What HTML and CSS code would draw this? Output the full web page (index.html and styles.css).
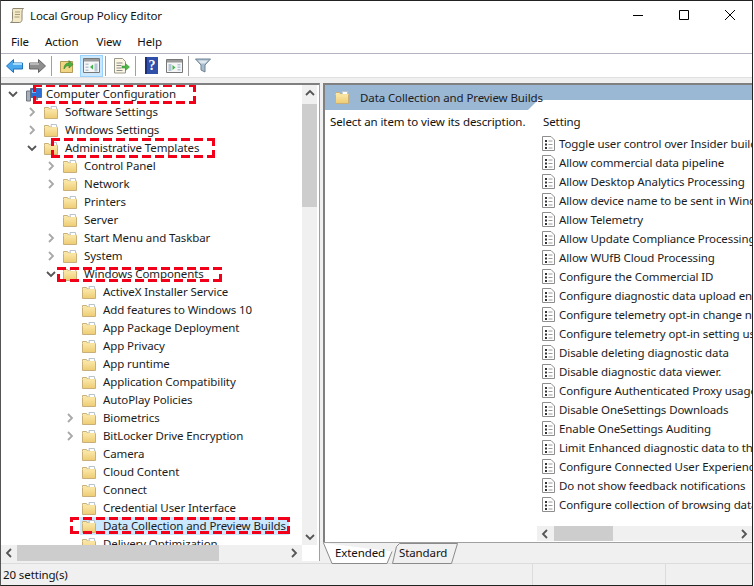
FILE: index.html
```html
<!DOCTYPE html>
<html lang="en">
<head>
<meta charset="utf-8">
<title>Local Group Policy Editor</title>
<link rel="stylesheet" href="styles.css">
</head>
<body>
<svg class="defs" width="0" height="0" aria-hidden="true">
  <defs>
    <linearGradient id="fg" x1="0" y1="0" x2="0" y2="1"><stop offset="0" stop-color="#fdeeb4"/><stop offset="1" stop-color="#eecb72"/></linearGradient>
    <symbol id="folder" viewBox="0 0 16 15">
      <path d="M1.500 2.500h4l1 1.500h8v9.500h-13z" fill="url(#fg)" stroke="#c9b07a"/>
      <path d="M8 1.500h5.500v3h-5z" fill="#fff" stroke="#b9c4cc"/>
      <path d="M1.500 4.500h13" stroke="#f7e3a0"/>
    </symbol>
    <symbol id="doc" viewBox="0 0 13 15">
      <path d="M.5.500h8.500l3.500 3.500v10.500h-12z" fill="#fff" stroke="#8e8e8e"/>
      <path d="M3 4h2v2h-2zM3 7.500h2v2h-2zM3 11h2v2h-2z" fill="#333"/>
      <path d="M6.500 5h4M6.500 8.500h4M6.500 12h4" stroke="#9a9a9a"/>
    </symbol>
    <symbol id="open" viewBox="0 0 12 12"><path d="M2 4l4 4 4-4" fill="none" stroke="#555" stroke-width="1.800"/></symbol>
    <symbol id="closed" viewBox="0 0 12 12"><path d="M4 2l4 4-4 4" fill="none" stroke="#a8a8a8" stroke-width="1.800"/></symbol>
    <symbol id="up" viewBox="0 0 12 12"><path d="M2 8l4-4 4 4" fill="none" stroke="#555" stroke-width="1.800"/></symbol>
    <symbol id="down" viewBox="0 0 12 12"><path d="M2 4l4 4 4-4" fill="none" stroke="#555" stroke-width="1.800"/></symbol>
    <symbol id="left" viewBox="0 0 12 12"><path d="M8 2l-4 4 4 4" fill="none" stroke="#555" stroke-width="1.800"/></symbol>
    <symbol id="right" viewBox="0 0 12 12"><path d="M4 2l4 4-4 4" fill="none" stroke="#555" stroke-width="1.800"/></symbol>
  </defs>
</svg>

<div class="window">
  <header class="titlebar">
    <svg class="app-icon" width="16" height="17" viewBox="0 0 16 17">
      <path d="M4 1.500h10.500c-1.500 1-1.500 3-1.500 5v6c0 1.500-1 3-2.500 3h-9c1.500-.5 2-1.500 2-3v-8c0-1.500 0-3 .5-3z" fill="#f3e9c6" stroke="#8d8672"/>
      <path d="M6 5h5M6 7.500h5M5.500 10h5" stroke="#a89c78"/>
    </svg>
    <span class="title-text">Local Group Policy Editor</span>
    <div class="controls">
      <svg width="46" height="20" viewBox="0 0 46 20"><path d="M18 10.500h10" stroke="#000"/></svg>
      <svg width="46" height="20" viewBox="0 0 46 20"><path d="M18.500 5.500h9v9h-9z" fill="none" stroke="#000"/></svg>
      <svg width="46" height="20" viewBox="0 0 46 20"><path d="M18 5l10 10M28 5l-10 10" stroke="#000" fill="none"/></svg>
    </div>
  </header>

  <nav class="menubar">
    <span class="menu-item">File</span>
    <span class="menu-item">Action</span>
    <span class="menu-item">View</span>
    <span class="menu-item">Help</span>
  </nav>

  <div class="toolbar">
    <span class="tool"><svg width="17" height="14" viewBox="0 0 17 14"><path d="M7.500.500v3.500h9v6h-9v3.500l-7-6.500z" fill="#4aa8ee" stroke="#1e73bb"/><path d="M7 5h9" stroke="#a5d8fb" stroke-width="2"/></svg></span>
    <span class="tool"><svg width="17" height="14" viewBox="0 0 17 14"><path d="M9.500.500v3.500h-9v6h9v3.500l7-6.500z" fill="#8e8e8e" stroke="#666"/><path d="M1 5h9" stroke="#b8b8b8" stroke-width="2"/></svg></span>
    <span class="tool-sep"></span>
    <span class="tool"><svg width="16" height="15" viewBox="0 0 16 15"><path d="M1.500 3.500h12v11h-12z" fill="#f0d582" stroke="#b59a58"/><path d="M5 11c0-4 2-6 5-6V2.500l4 4-4 3.500V7.500C8 7.500 6.500 8.500 5 11z" fill="#4caf3f" stroke="#2d7d2a" stroke-width=".6"/></svg></span>
    <span class="tool tool-on"><svg width="17" height="15" viewBox="0 0 17 15"><path d="M.5.500h16v14h-16z" fill="#f6f6f6" stroke="#777"/><path d="M1 1h15v2.500h-15z" fill="#9a9a9a"/><path d="M2.500 5.500h3v1.500h-3zM2.500 8.500h3v1.500h-3zM2.500 11.500h3v1.500h-3zM11.500 5.500h3v8h-3z" fill="#b6c6d6"/><path d="M10 6.500v5l-3-2.500z" fill="#3fb54a"/></svg></span>
    <span class="tool-sep"></span>
    <span class="tool"><svg width="17" height="16" viewBox="0 0 17 16"><path d="M1.500.500h8l3 3v11.500h-11z" fill="#fbf6e2" stroke="#9a9a8c"/><path d="M3.500 5h6M3.500 7.500h5M3.500 10h5M3.500 12.500h6" stroke="#8c8c8c"/><path d="M9 8h3.500V5.500L16.500 9l-4 3.500V10H9z" fill="#4fb648" stroke="#2f8a30" stroke-width=".5"/></svg></span>
    <span class="tool-sep"></span>
    <span class="tool"><svg class="help" width="13" height="17" viewBox="0 0 13 17"><rect width="13" height="17" fill="#2f4fa8"/><rect x="0" width="2" height="17" fill="#1c2f78"/><text x="3.500" y="13" class="help-q">?</text></svg></span>
    <span class="tool"><svg width="17" height="14" viewBox="0 0 17 14"><path d="M.5.500h16v13h-16z" fill="#f6f6f6" stroke="#777"/><path d="M1 1h15v2.500h-15z" fill="#9a9a9a"/><path d="M11.500 5h3v1.500h-3zM11.500 7.500h3v1.500h-3zM11.500 10h3v1.500h-3zM2.500 5h3v7h-3z" fill="#b6c6d6"/><path d="M6.500 6v5l3-2.500z" fill="#3fb54a"/></svg></span>
    <span class="tool-sep"></span>
    <span class="tool"><svg width="16" height="15" viewBox="0 0 16 15"><path d="M.5 1h15l-5.500 6v7l-4-2v-5z" fill="#a8bccb" stroke="#6d8295"/><path d="M3 2.500h10l-3 3h-4z" fill="#dfe8ef"/></svg></span>
  </div>
  <div class="strip"></div>

  <main class="panes">
    <section class="tree-pane">
      <div class="tree-body">
        <div class="tree">
          <div class="row lv0"><svg class="twist"><use href="#open"/></svg>
            <svg class="computer" width="16" height="15" viewBox="0 0 16 15"><path d="M.5 4h4v10h-4z" fill="#a9afb8" stroke="#6f7680"/><path d="M4.500 1.500h11v9h-11z" fill="#2b6fd4" stroke="#5a6e8a"/><path d="M6 3h4v3h-4z" fill="#74b4f2"/><path d="M8 11h4v2h-4z" fill="#8a93a0"/></svg>
            <span class="label">Computer Configuration</span><i class="mark mark-a"></i></div>
          <div class="row lv1"><svg class="twist"><use href="#closed"/></svg><svg class="fld"><use href="#folder"/></svg><span class="label">Software Settings</span></div>
          <div class="row lv1"><svg class="twist"><use href="#closed"/></svg><svg class="fld"><use href="#folder"/></svg><span class="label">Windows Settings</span></div>
          <div class="row lv1"><svg class="twist"><use href="#open"/></svg><svg class="fld"><use href="#folder"/></svg><span class="label">Administrative Templates</span><i class="mark mark-b"></i></div>
          <div class="row lv2"><svg class="twist"><use href="#closed"/></svg><svg class="fld"><use href="#folder"/></svg><span class="label">Control Panel</span></div>
          <div class="row lv2"><svg class="twist"><use href="#closed"/></svg><svg class="fld"><use href="#folder"/></svg><span class="label">Network</span></div>
          <div class="row lv2"><span class="twist"></span><svg class="fld"><use href="#folder"/></svg><span class="label">Printers</span></div>
          <div class="row lv2"><span class="twist"></span><svg class="fld"><use href="#folder"/></svg><span class="label">Server</span></div>
          <div class="row lv2"><svg class="twist"><use href="#closed"/></svg><svg class="fld"><use href="#folder"/></svg><span class="label">Start Menu and Taskbar</span></div>
          <div class="row lv2"><svg class="twist"><use href="#closed"/></svg><svg class="fld"><use href="#folder"/></svg><span class="label">System</span></div>
          <div class="row lv2"><svg class="twist"><use href="#open"/></svg><svg class="fld"><use href="#folder"/></svg><span class="label">Windows Components</span><i class="mark mark-c"></i></div>
          <div class="row lv3"><span class="twist"></span><svg class="fld"><use href="#folder"/></svg><span class="label">ActiveX Installer Service</span></div>
          <div class="row lv3"><span class="twist"></span><svg class="fld"><use href="#folder"/></svg><span class="label">Add features to Windows 10</span></div>
          <div class="row lv3"><span class="twist"></span><svg class="fld"><use href="#folder"/></svg><span class="label">App Package Deployment</span></div>
          <div class="row lv3"><span class="twist"></span><svg class="fld"><use href="#folder"/></svg><span class="label">App Privacy</span></div>
          <div class="row lv3"><span class="twist"></span><svg class="fld"><use href="#folder"/></svg><span class="label">App runtime</span></div>
          <div class="row lv3"><span class="twist"></span><svg class="fld"><use href="#folder"/></svg><span class="label">Application Compatibility</span></div>
          <div class="row lv3"><span class="twist"></span><svg class="fld"><use href="#folder"/></svg><span class="label">AutoPlay Policies</span></div>
          <div class="row lv3"><svg class="twist"><use href="#closed"/></svg><svg class="fld"><use href="#folder"/></svg><span class="label">Biometrics</span></div>
          <div class="row lv3"><svg class="twist"><use href="#closed"/></svg><svg class="fld"><use href="#folder"/></svg><span class="label">BitLocker Drive Encryption</span></div>
          <div class="row lv3"><span class="twist"></span><svg class="fld"><use href="#folder"/></svg><span class="label">Camera</span></div>
          <div class="row lv3"><span class="twist"></span><svg class="fld"><use href="#folder"/></svg><span class="label">Cloud Content</span></div>
          <div class="row lv3"><span class="twist"></span><svg class="fld"><use href="#folder"/></svg><span class="label">Connect</span></div>
          <div class="row lv3"><span class="twist"></span><svg class="fld"><use href="#folder"/></svg><span class="label">Credential User Interface</span></div>
          <div class="row lv3 selected"><span class="twist"></span><svg class="fld"><use href="#folder"/></svg><span class="label">Data Collection and Preview Builds</span><i class="mark mark-d"></i></div>
          <div class="row lv3"><span class="twist"></span><svg class="fld"><use href="#folder"/></svg><span class="label">Delivery Optimization</span></div>
        </div>
        <div class="vscroll">
          <svg class="sb-arrow"><use href="#up"/></svg>
          <div class="vtrack"><div class="vthumb"></div></div>
          <svg class="sb-arrow"><use href="#down"/></svg>
        </div>
      </div>
      <div class="hscroll hscroll-tree">
        <svg class="sb-arrow"><use href="#left"/></svg>
        <div class="htrack"><div class="hthumb hthumb-tree"></div></div>
        <svg class="sb-arrow"><use href="#right"/></svg>
      </div>
    </section>

    <section class="detail-pane">
      <div class="detail-box">
        <div class="detail-head">
          <svg class="fld"><use href="#folder"/></svg>
          <span class="head-text">Data Collection and Preview Builds</span>
        </div>
        <div class="detail-body">
          <p class="desc">Select an item to view its description.</p>
          <div class="settings">
            <div class="set-title">Setting</div>
            <div class="set-list">
              <div class="set-row"><svg class="doc"><use href="#doc"/></svg><span>Toggle user control over Insider builds</span></div>
              <div class="set-row"><svg class="doc"><use href="#doc"/></svg><span>Allow commercial data pipeline</span></div>
              <div class="set-row"><svg class="doc"><use href="#doc"/></svg><span>Allow Desktop Analytics Processing</span></div>
              <div class="set-row"><svg class="doc"><use href="#doc"/></svg><span>Allow device name to be sent in Windows diagnostic data</span></div>
              <div class="set-row"><svg class="doc"><use href="#doc"/></svg><span>Allow Telemetry</span></div>
              <div class="set-row"><svg class="doc"><use href="#doc"/></svg><span>Allow Update Compliance Processing</span></div>
              <div class="set-row"><svg class="doc"><use href="#doc"/></svg><span>Allow WUfB Cloud Processing</span></div>
              <div class="set-row"><svg class="doc"><use href="#doc"/></svg><span>Configure the Commercial ID</span></div>
              <div class="set-row"><svg class="doc"><use href="#doc"/></svg><span>Configure diagnostic data upload endpoint</span></div>
              <div class="set-row"><svg class="doc"><use href="#doc"/></svg><span>Configure telemetry opt-in change notifications</span></div>
              <div class="set-row"><svg class="doc"><use href="#doc"/></svg><span>Configure telemetry opt-in setting user interface</span></div>
              <div class="set-row"><svg class="doc"><use href="#doc"/></svg><span>Disable deleting diagnostic data</span></div>
              <div class="set-row"><svg class="doc"><use href="#doc"/></svg><span>Disable diagnostic data viewer.</span></div>
              <div class="set-row"><svg class="doc"><use href="#doc"/></svg><span>Configure Authenticated Proxy usage</span></div>
              <div class="set-row"><svg class="doc"><use href="#doc"/></svg><span>Disable OneSettings Downloads</span></div>
              <div class="set-row"><svg class="doc"><use href="#doc"/></svg><span>Enable OneSettings Auditing</span></div>
              <div class="set-row"><svg class="doc"><use href="#doc"/></svg><span>Limit Enhanced diagnostic data to the minimum</span></div>
              <div class="set-row"><svg class="doc"><use href="#doc"/></svg><span>Configure Connected User Experiences</span></div>
              <div class="set-row"><svg class="doc"><use href="#doc"/></svg><span>Do not show feedback notifications</span></div>
              <div class="set-row"><svg class="doc"><use href="#doc"/></svg><span>Configure collection of browsing data</span></div>
            </div>
            <div class="hscroll hscroll-list">
              <svg class="sb-arrow"><use href="#left"/></svg>
              <div class="htrack"><div class="hthumb hthumb-list"></div></div>
              <svg class="sb-arrow"><use href="#right"/></svg>
            </div>
          </div>
        </div>
      </div>
      <div class="tabs">
        <div class="tab tab-ext">
          <svg class="tab-shape" width="70" height="21" viewBox="0 0 70 21"><path d="M.5 0l8.500 20.500h55l5-12" fill="#fff" stroke="#8a8a8a"/></svg>
          <span class="tab-label">Extended</span>
        </div>
        <div class="tab tab-std">
          <svg class="tab-shape" width="66" height="21" viewBox="0 0 66 21"><path d="M.5 20.500l4-17 3-3h58l-6 20z" fill="#f0f0f0" stroke="#8a8a8a"/></svg>
          <span class="tab-label">Standard</span>
        </div>
      </div>
    </section>
  </main>

  <footer class="statusbar">
    <span class="status-a">20 setting(s)</span>
    <span class="status-b"></span>
    <span class="status-c"></span>
  </footer>
</div>
</body>
</html>
```

FILE: styles.css
```css
* { box-sizing: border-box; }
html, body { margin: 0; padding: 0; background: #fff; }
body {
  width: 754px;
  height: 586px;
  overflow: hidden;
  font: 11.5px/16px "Noto Sans", "Open Sans", "Liberation Sans", sans-serif;
  letter-spacing: -0.1px;
  color: #111;
}
.defs { position: absolute; }
.window {
  width: 753px;
  height: 586px;
  display: flex;
  flex-direction: column;
  border: 1px solid #222;
  border-left-color: #555;
  background: #fff;
}
.titlebar {
  height: 29px;
  flex: none;
  display: flex;
  align-items: center;
  padding-left: 8px;
}
.app-icon { margin-right: 5px; }
.title-text { flex: 1; padding-top: 1px; }
.controls { display: flex; margin-right: -1px; margin-top: -1px; }
.menubar {
  height: 23px;
  flex: none;
  display: flex;
  align-items: center;
  padding-left: 10px;
  gap: 16px;
}
.menu-item:nth-child(3) { margin-left: 2px; }
.toolbar {
  height: 24px;
  flex: none;
  display: flex;
  align-items: center;
  padding-left: 2px;
  border-top: 1px solid #b4b4c0;
}
.tool {
  width: 23px;
  height: 22px;
  display: flex;
  align-items: center;
  justify-content: center;
  border: 1px solid transparent;
}
.tool-on { background: #cce8ff; border-color: #99d1ff; }
.tool-sep { width: 1px; height: 20px; background: #a0a0a0; margin: 0 2px; }
.toolbar .tool-sep:nth-child(3) { margin-right: 4px; }
.toolbar .tool-sep:nth-child(6) { margin-right: 4px; }
.toolbar .tool-sep:nth-child(8) { margin-right: 4px; }
.toolbar .tool:nth-child(4) { padding-right: 1px; margin-right: 1px; }
.help-q { font: bold 14px "Liberation Serif", serif; fill: #fff; }
.strip { height: 6px; flex: none; background: #f0f0f0; border-top: 1px solid #e0e0e0; }

.panes { flex: 1; min-height: 0; display: flex; background: #f0f0f0; }

.tree-pane {
  width: 319px;
  flex: none;
  display: flex;
  flex-direction: column;
  margin-bottom: 2px;
  background: #fff;
  border-top: 2px solid #808080;
  border-right: 1px solid #a0a0a0;
}
.tree-body { flex: 1; min-height: 0; display: flex; }
.tree { flex: 1; min-width: 0; overflow: hidden; }
.row {
  height: 18px;
  display: flex;
  align-items: center;
  position: relative;
  white-space: nowrap;
  color: #1c1c1c;
}
.lv0 { padding-left: 6px; }
.lv1 { padding-left: 25px; }
.lv2 { padding-left: 44px; }
.lv3 { padding-left: 63px; }
.twist { width: 12px; height: 12px; flex: none; margin-right: 5px; }
.fld { width: 16px; height: 15px; flex: none; }
.computer { flex: none; margin-left: 2px; margin-right: 4px; }
.row .label { margin-left: 6px; }
.row.lv0 .label { margin-left: 0; }
.selected::before {
  content: "";
  position: absolute;
  left: 79px;
  right: 13px;
  top: 0;
  bottom: 0;
  background: #cce8ff;
}
.selected .fld, .selected .label, .selected .twist { position: relative; }

.mark {
  position: absolute;
  --c: #f2001a;
  background:
    repeating-linear-gradient(90deg, var(--c) 0 9px, transparent 9px 13px) left top / 100% 3px no-repeat,
    repeating-linear-gradient(90deg, var(--c) 0 9px, transparent 9px 13px) left bottom / 100% 3px no-repeat,
    repeating-linear-gradient(0deg, var(--c) 0 8px, transparent 8px 12px) left top / 3px 100% no-repeat,
    repeating-linear-gradient(0deg, var(--c) 0 8px, transparent 8px 12px) right top / 3px 100% no-repeat;
  z-index: 2;
}
.mark-a { left: 32px; width: 163px; top: -1px; height: 20px; }
.mark-b { left: 50px; width: 164px; top: -1px; height: 20px; }
.mark-c { left: 56px; width: 165px; top: 2px; height: 15px; }
.mark-d { left: 69px; width: 220px; top: 0; height: 17px; }

.vscroll { width: 15px; flex: none; margin-right: 2px; display: flex; flex-direction: column; background: #f0f0f0; }
.sb-arrow { width: 12px; height: 12px; flex: none; margin: 2px 1.5px; }
.vtrack { flex: 1; }
.vthumb { height: 103px; margin-top: 3px; background: #cdcdcd; }
.hscroll { height: 16px; flex: none; display: flex; align-items: center; background: #f0f0f0; }
.hscroll-tree { margin-right: 17px; }
.hscroll .sb-arrow { margin: 0 2px; }
.htrack { flex: 1; align-self: stretch; }
.hthumb { height: 100%; background: #cdcdcd; }
.hthumb-tree { width: 202px; }
.hthumb-list { width: 59px; margin-left: 1px; }

.detail-pane { flex: 1; min-width: 0; display: flex; flex-direction: column; margin-left: 3px; }
.detail-box {
  flex: 1;
  min-height: 0;
  display: flex;
  flex-direction: column;
  background: #fff;
  border-top: 2px solid #808080;
  border-left: 2px solid #808080;
  overflow: hidden;
}
.detail-head {
  height: 25px;
  flex: none;
  display: flex;
  align-items: center;
  padding-left: 9px;
  background: #9ab7d3;
  position: relative;
  white-space: nowrap;
  color: #1c1c1c;
}
.detail-head::after {
  content: "";
  position: absolute;
  left: 203px;
  right: 0;
  top: 15px;
  bottom: 0;
  background: #fff;
  clip-path: polygon(10px 0, 100% 0, 100% 100%, 0 100%);
}
.head-text { margin-left: 10px; position: relative; z-index: 1; }
.detail-body { flex: 1; min-height: 0; display: flex; margin-top: -1px; }
.desc { width: 207px; flex: none; margin: 5px 0 0 5px; white-space: nowrap; }
.settings { flex: 1; min-width: 0; display: flex; flex-direction: column; }
.set-title { height: 25px; flex: none; padding: 5px 0 0 6px; }
.set-list { flex: 1; min-height: 0; overflow: hidden; }
.set-row { height: 19px; display: flex; align-items: center; gap: 4px; padding-left: 5px; white-space: nowrap; color: #1c1c1c; }
.doc { width: 13px; height: 15px; flex: none; }
.hscroll-list { height: 15px; margin-bottom: 1px; }

.tabs { height: 21px; flex: none; display: flex; position: relative; border-top: 1px solid #a0a0a0; }
.tab { position: relative; height: 20px; display: flex; align-items: center; }
.tab-ext { width: 69px; padding-left: 12px; }
.tab-std { width: 66px; padding-left: 7px; }
.tab-shape { position: absolute; left: 0; top: 0; }
.tab-label { position: relative; }

.statusbar {
  height: 22px;
  flex: none;
  display: flex;
  align-items: center;
  background: #f0f0f0;
  border-top: 1px solid #dcdcdc;
}
.status-a { width: 532px; height: 100%; padding: 3px 0 0 2px; border-right: 1px solid #dcdcdc; }
.status-b { width: 133px; height: 100%; border-right: 1px solid #dcdcdc; }
.status-c { flex: 1; }
```
